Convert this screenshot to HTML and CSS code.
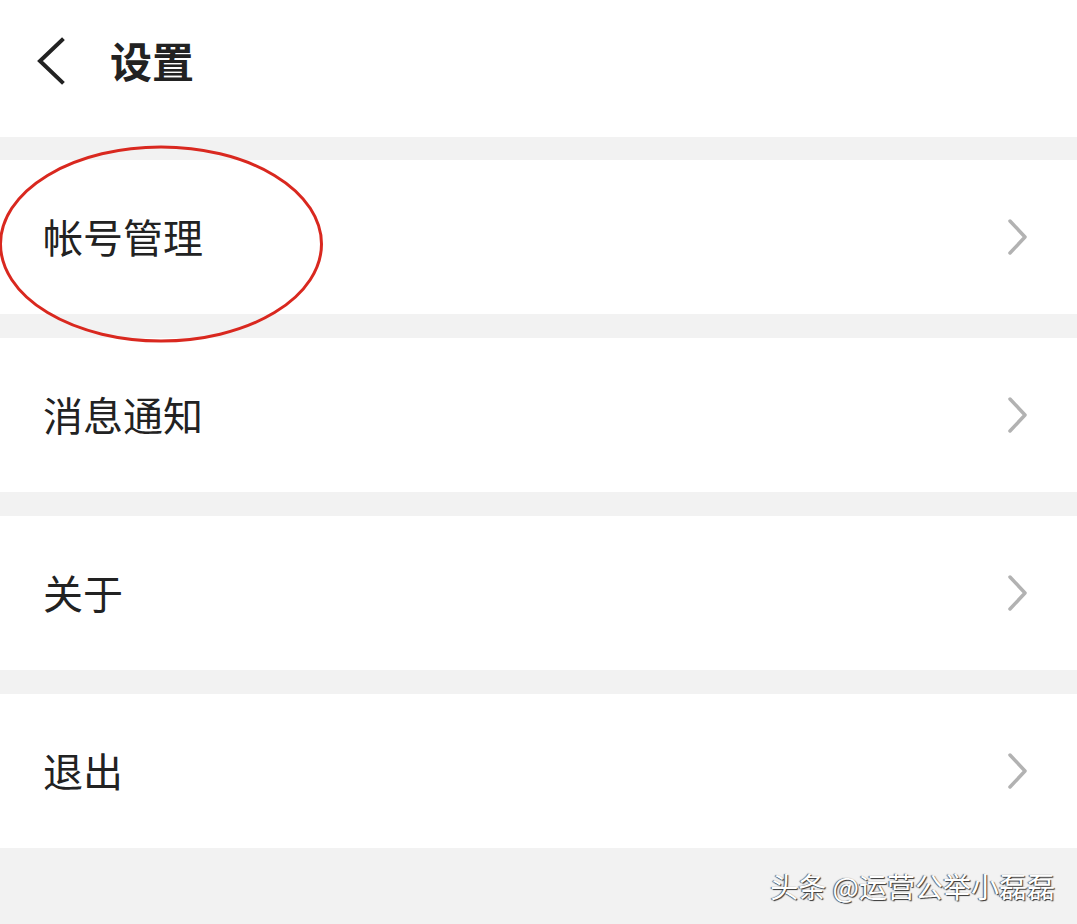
FILE: index.html
```html
<!DOCTYPE html>
<html lang="zh-CN">
<head>
  <meta charset="UTF-8" />
  <title>设置</title>
  <meta name="viewport" content="width=device-width, initial-scale=1.0" />
  <link rel="stylesheet" href="styles.css">
</head>
<body>
  <div class="header">
    <svg class="back" width="32" height="50" viewBox="0 0 32 50">
      <polyline points="26,3 4,24 26,45" fill="none" stroke="#222" stroke-width="4" stroke-linecap="square" />
    </svg>
    <h1>设置</h1>
  </div>

  <div class="list">
    <div class="item">
      <span>帐号管理</span>
      <svg class="chev" width="24" height="40" viewBox="0 0 24 40"><polyline points="5,4 20,20 5,36" fill="none" stroke="#b2b2b2" stroke-width="3.5" stroke-linecap="round" stroke-linejoin="round" /></svg>
    </div>
    <div class="item">
      <span>消息通知</span>
      <svg class="chev" width="24" height="40" viewBox="0 0 24 40"><polyline points="5,4 20,20 5,36" fill="none" stroke="#b2b2b2" stroke-width="3.5" stroke-linecap="round" stroke-linejoin="round" /></svg>
    </div>
    <div class="item">
      <span>关于</span>
      <svg class="chev" width="24" height="40" viewBox="0 0 24 40"><polyline points="5,4 20,20 5,36" fill="none" stroke="#b2b2b2" stroke-width="3.5" stroke-linecap="round" stroke-linejoin="round" /></svg>
    </div>
    <div class="item">
      <span>退出</span>
      <svg class="chev" width="24" height="40" viewBox="0 0 24 40"><polyline points="5,4 20,20 5,36" fill="none" stroke="#b2b2b2" stroke-width="3.5" stroke-linecap="round" stroke-linejoin="round" /></svg>
    </div>
  </div>

  <div class="footer">
    <span class="mark">头条 @运营公举小磊磊</span>
  </div>

  <!-- red annotation circle -->
  <svg class="circle" width="328" height="201" viewBox="0 0 328 201">
    <ellipse cx="163" cy="100" rx="160.5" ry="97" fill="none" stroke="#d9281f" stroke-width="3" />
  </svg>
</body>
</html>
```

FILE: styles.css
```css
body {
  margin: 0;
  font-family: "Noto Sans CJK SC", "Noto Sans", sans-serif;
  background-color: #f2f2f2;
  color: #222;
  position: relative;
  height: 924px;
  overflow: hidden;
}
.header {
  height: 137px;
  background-color: #fff;
  display: flex;
  align-items: center;
  padding-left: 36px;
  margin-bottom: 23px;
}
.back {
  display: block;
  margin-top: -14px;
}
.header h1 {
  margin: 0 0 0 42px;
  font-size: 42px;
  font-weight: 700;
  color: #222;
  margin-top: -18px;
}
.list {
  display: flex;
  flex-direction: column;
  gap: 24px;
}
.item {
  height: 154px;
  background-color: #fff;
  display: flex;
  align-items: center;
  justify-content: space-between;
  padding: 0 48px 0 43px;
  font-size: 40px;
}
.item span {
  margin-top: -2px;
}
.chev {
  display: block;
}
.footer {
  height: 76px;
  display: flex;
  align-items: center;
  justify-content: flex-end;
  padding-right: 22px;
}
.mark {
  font-size: 28px;
  color: #fff;
  text-shadow: 1px 1px 1px #333, -1px 0 1px #555;
}
.circle {
  position: absolute;
  left: -2px;
  top: 144px;
}
```
